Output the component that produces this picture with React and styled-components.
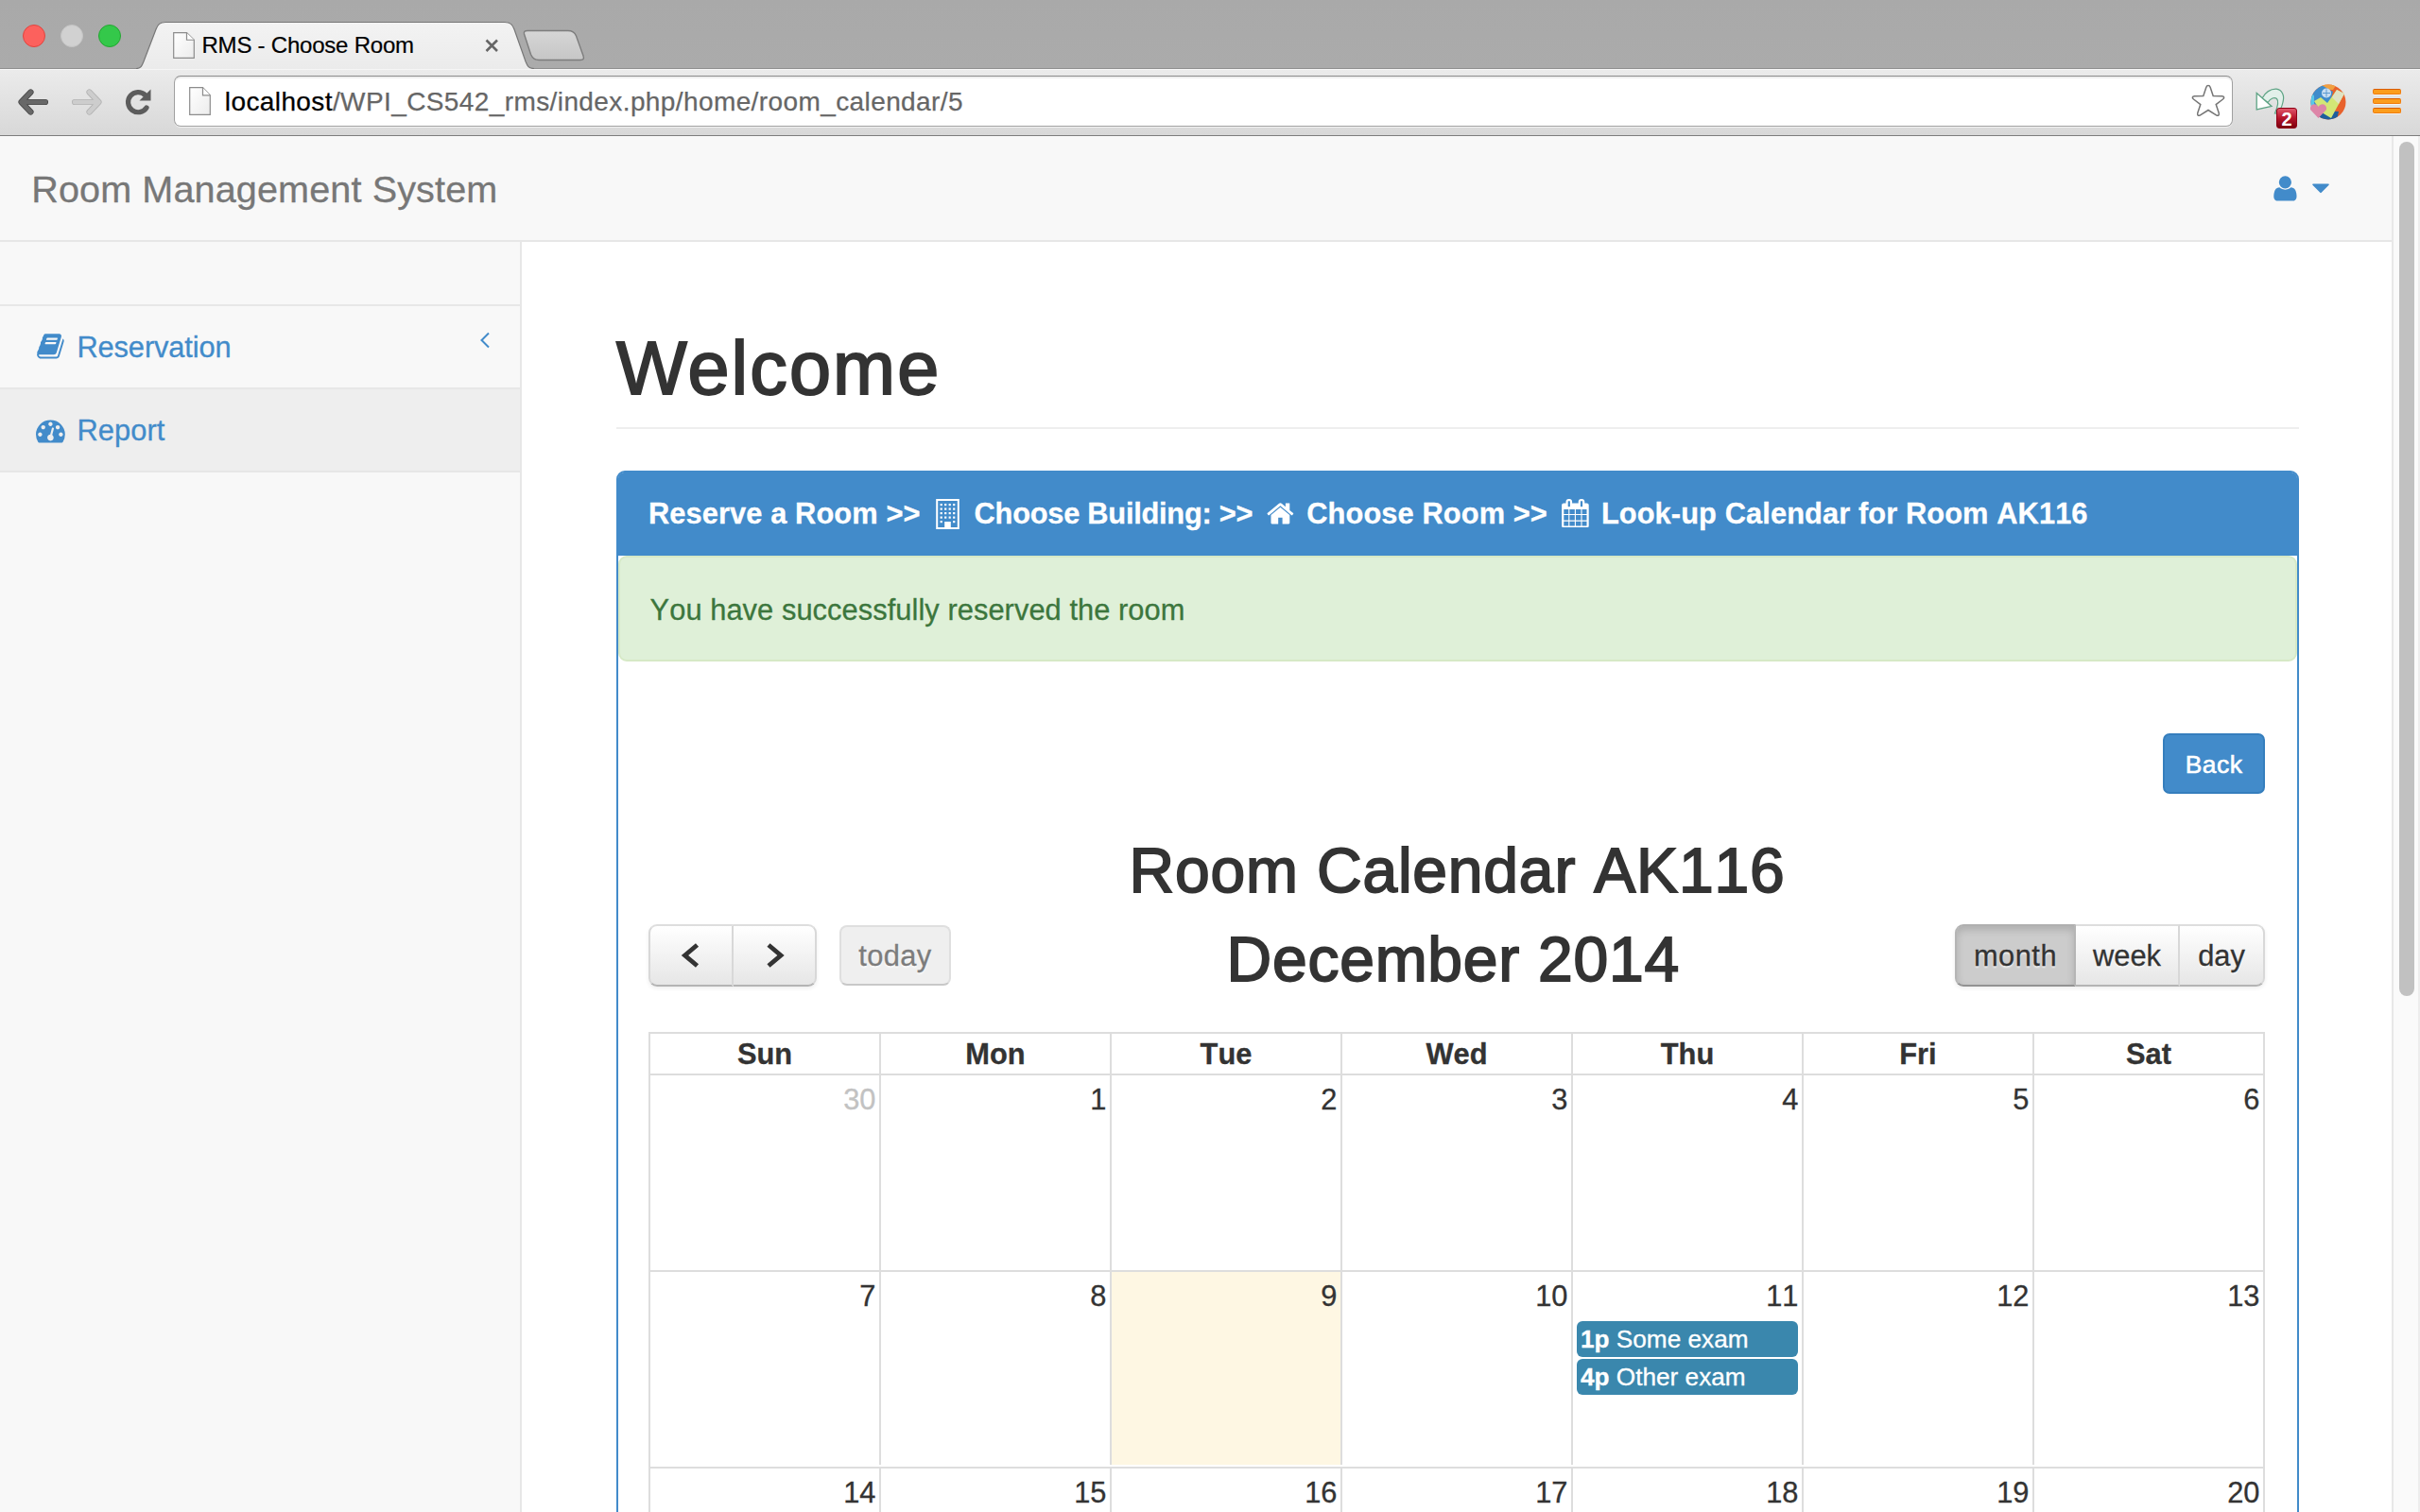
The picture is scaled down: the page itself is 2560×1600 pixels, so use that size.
import React from "react";
import styled, { createGlobalStyle, css } from "styled-components";

const Global = createGlobalStyle`
  *, *::before, *::after { box-sizing: border-box; }
  html, body { margin: 0; padding: 0; background: #fff; }
  body {
    font-family: "Liberation Sans", Arial, Helvetica, sans-serif;
    font-size: 30.8px;
    line-height: 44px;
    font-kerning: none;
    color: #333;
    overflow: hidden;
  }
  svg { display: block; flex: none; }
`;

const Window = styled.div`
  width: 2560px;
  height: 1600px;
  overflow: hidden;
  display: flex;
  flex-direction: column;
`;

/* ---------- browser chrome ---------- */

const TabStrip = styled.div`
  height: 73px;
  flex: none;
  display: flex;
  align-items: flex-start;
  background: linear-gradient(#a9a9a9, #ababab);
  border-bottom: 1px solid #8f8f8f;
`;

const Lights = styled.div`
  display: flex;
  gap: 16px;
  padding: 26px 0 0 24px;
  width: 144px;
`;

const Light = styled.span`
  width: 24px;
  height: 24px;
  border-radius: 50%;
  background: ${(p) => p.$fill};
  border: 1px solid ${(p) => p.$edge};
`;

const Tab = styled.div`
  position: relative;
  width: 422px;
  height: 73px;
  padding: 23px 0 0 39px;
  display: flex;
`;

const TabShape = styled.svg`
  position: absolute;
  left: 0;
  top: 0;
`;

const TabTitle = styled.span`
  position: relative;
  width: 299px;
  margin-left: 7.5px;
  font-size: 24px;
  line-height: 50px;
  letter-spacing: -0.22px;
  color: #000;
  -webkit-text-stroke: 0.2px;
`;

const TabFile = styled.span`
  position: relative;
  padding-top: 11px;
`;

const TabClose = styled.span`
  position: relative;
  padding: 18px 0 0 0;
`;

const NewTab = styled.div`
  padding-top: 31px;
  margin-left: -13px;
`;

const Toolbar = styled.div`
  height: 71px;
  flex: none;
  display: flex;
  align-items: flex-start;
  background: linear-gradient(#ebebeb, #d8d8d8);
  border-top: 1px solid #f6f6f6;
  border-bottom: 1px solid #7c7c7c;
`;

const NavIcons = styled.div`
  width: 184px;
  display: flex;
  padding: 19px 0 0 18px;
  gap: 22.5px;
`;

const AddressBar = styled.div`
  width: 2178px;
  height: 54px;
  margin-top: 6px;
  padding: 0 7px 0 15px;
  display: flex;
  align-items: center;
  background: #fff;
  border: 1px solid #a0a0a0;
  border-top-color: #8c8c8c;
  border-radius: 7px;
  box-shadow: inset 0 2px 1px #eee, 0 1px 0 #f2f2f2;
`;

const Url = styled.div`
  flex: 1;
  margin-left: 14.8px;
  padding-top: 2px;
  font-size: 28px;
  letter-spacing: 0.4px;
  color: #666;
  -webkit-text-stroke: 0.25px;
  b { font-weight: 400; color: #000; }
`;

const Extension = styled.div`
  position: relative;
  margin-left: 24px;
  margin-top: 19px;
  width: 46px;
`;

const Badge = styled.span`
  position: absolute;
  left: 22px;
  top: 21px;
  width: 22px;
  height: 22px;
  border-radius: 3px;
  background: linear-gradient(#e0566a, #b5142a 50%, #7c000f);
  border: 1px solid #8e0014;
  color: #fff;
  font-size: 20px;
  font-weight: 700;
  line-height: 22px;
  text-align: center;
`;

const ExtensionBall = styled.div`
  margin-left: 12px;
  margin-top: 15px;
  width: 66px;
`;

const Hamburger = styled.div`
  margin-top: 20px;
  display: flex;
  flex-direction: column;
  gap: 4px;
  i {
    width: 30px;
    height: 6px;
    border-radius: 2px;
    background: #fb9d1c;
    border: 1px solid #ef7d10;
    border-top-color: #d85c00;
    box-shadow: 0 1px 0 #f4f4f4;
  }
`;

/* ---------- page ---------- */

const Viewport = styled.div`
  flex: 1;
  min-height: 0;
  display: flex;
  -webkit-text-stroke: 0.3px;
`;

const Page = styled.div`
  width: 2530px;
  display: flex;
  flex-direction: column;
`;

const ScrollTrack = styled.div`
  width: 30px;
  padding: 6px 0 0 6px;
  background: #fafafa;
  border-left: 2px solid #e8e8e8;
  border-right: 2px solid #ededed;
`;

const ScrollThumb = styled.div`
  width: 16px;
  height: 904px;
  border-radius: 8px;
  background: #c1c1c1;
`;

const Navbar = styled.header`
  height: 112px;
  flex: none;
  display: flex;
  justify-content: space-between;
  padding: 34px 66px 0 33.2px;
  background: #f8f8f8;
  border-bottom: 2px solid #e7e7e7;
`;

const Brand = styled.span`
  font-size: 39.6px;
  letter-spacing: 0.12px;
  color: #777;
`;

const UserMenu = styled.div`
  display: flex;
  gap: 13px;
  padding-top: 6px;
  color: #428bca;
`;

const Body = styled.div`
  flex: 1;
  min-height: 0;
  display: flex;
`;

const Sidebar = styled.nav`
  width: 552px;
  padding-top: 66px;
  background: #f8f8f8;
  border-right: 2px solid #e7e7e7;
`;

const NavItem = styled.a`
  display: flex;
  height: 88px;
  padding: 0 31px 0 38px;
  line-height: 88px;
  color: #428bca;
  background: ${(p) => (p.$active ? "#eee" : "transparent")};
  border-bottom: 2px solid #e7e7e7;
  svg:first-child { margin-top: ${(p) => (p.$active ? 28 : 27)}px; }
  &:first-child {
    height: 90px;
    border-top: 2px solid #e7e7e7;
  }
`;

const NavLabel = styled.span`
  flex: 1;
  margin-left: 12.6px;
  letter-spacing: ${(p) => p.$ls}px;
`;

const Chevron = styled.svg`
  margin-top: 27px;
`;

const Main = styled.main`
  width: 1780px;
  margin-left: 100px;
`;

const PageTitle = styled.h1`
  margin: 0;
  height: 198px;
  padding-top: 90px;
  border-bottom: 2px solid #eee;
  font-size: 79.2px;
  font-weight: 400;
  line-height: 88px;
  letter-spacing: 2.1px;
  font-kerning: normal;
  -webkit-text-stroke: 2px #333;
`;

const Panel = styled.section`
  margin-top: 44px;
  height: 1300px;
  border: 2px solid #428bca;
  border-radius: 9px;
`;

const PanelHead = styled.div`
  display: flex;
  height: 88px;
  padding: 0 0 0 32px;
  border-radius: 6px 6px 0 0;
  background: #428bca;
  color: #fff;
  font-weight: 700;
  line-height: 88px;
  white-space: nowrap;
  svg { margin-top: 27.5px; }
`;

const Crumb = styled.span`
  width: ${(p) => p.$w}px;
  margin-left: ${(p) => p.$gap || 0}px;
  letter-spacing: ${(p) => p.$ls || 0}px;
`;

const Alert = styled.div`
  height: 112px;
  padding-left: 31.6px;
  background: #dff0d8;
  border: 2px solid #d6e9c6;
  border-radius: 9px;
  color: #3c763d;
  line-height: 111px;
  letter-spacing: 0.07px;
`;

const PanelBody = styled.div`
  padding: 76px 34px 0 32px;
`;

const BackRow = styled.div`
  display: flex;
  justify-content: flex-end;
`;

const BackButton = styled.button`
  width: 108px;
  height: 64px;
  padding: 0;
  border: 2px solid #357ebd;
  border-radius: 7px;
  background: #428bca;
  color: #fff;
  font: 26.4px/62px "Liberation Sans", Arial, sans-serif;
  letter-spacing: 0.5px;
  -webkit-text-stroke: 0.6px #fff;
`;

const titleType = css`
  margin: 0;
  font-size: 66px;
  font-weight: 400;
  text-align: center;
  -webkit-text-stroke: 1.8px #333;
`;

const RoomTitle = styled.h2`
  ${titleType}
  height: 138px;
  padding-top: 44px;
  line-height: 74px;
  letter-spacing: 0.8px;
  text-indent: 1px;
`;

const CalToolbar = styled.div`
  display: grid;
  grid-template-columns: 328px 1fr 328px;
  height: 114px;
`;

const Month = styled.h2`
  ${titleType}
  line-height: 74px;
  letter-spacing: 0.75px;
  padding-right: 7.5px;
`;

const Side = styled.div`
  display: flex;
  align-items: flex-start;
`;

const ButtonGroup = styled.div`
  display: flex;
  height: 66px;
  border-radius: 9px;
  box-shadow: 0 2px 4px rgba(0, 0, 0, 0.07);
`;

const CalButton = styled.button`
  display: flex;
  align-items: center;
  justify-content: center;
  width: ${(p) => p.$w}px;
  height: 66px;
  padding: 0;
  border: 2px solid;
  border-color: #dedede #d8d8d8 #b4b4b4 #d8d8d8;
  border-left-width: ${(p) => (p.$joined ? 0 : 2)}px;
  border-radius: ${(p) => p.$radius || "0"};
  background: linear-gradient(#fff, #e6e6e6);
  color: #333;
  font: 30.8px/60px "Liberation Sans", Arial, sans-serif;
  letter-spacing: ${(p) => p.$ls || 0}px;
  text-shadow: 0 2px 2px rgba(255, 255, 255, 0.75);
  ${(p) =>
    p.$active &&
    css`
      background: #ccc;
      border-color: #b0b0b0 #b5b5b5 #929292;
      box-shadow: inset 0 4px 9px rgba(0, 0, 0, 0.15);
    `}
  ${(p) =>
    p.$disabled &&
    css`
      height: 64px;
      margin: 1px 0 0 24px;
      background: #efefef;
      color: #7c7c7c;
      border-color: #dfdfdf #dfdfdf #c8c8c8;
    `}
`;

const ButtonText = styled.span`
  padding-top: 2px;
  -webkit-text-stroke: 0.3px;
`;

const Calendar = styled.div`
  width: 1710px;
  border: solid #ddd;
  border-width: 2px 2px 0 2px;
`;

const Week = styled.div`
  display: grid;
  grid-template-columns: repeat(7, 244px);
  height: ${(p) => (p.$head ? 44 : 208)}px;
  border-bottom: 2px solid #ddd;
  padding-bottom: ${(p) => (p.$gap ? 2 : 0)}px;
`;

const DayName = styled.div`
  width: 244px;
  border-right: 2px solid #ddd;
  font-weight: 700;
  line-height: 44px;
  text-align: center;
  &:last-child { width: 242px; border-right: 0; }
`;

const Day = styled.div`
  width: 244px;
  padding: 4px 3.6px 0 4px;
  border-right: 2px solid #ddd;
  background: ${(p) => (p.$today ? "#fef7e3" : "transparent")};
  color: ${(p) => (p.$other ? "#c2c2c2" : "#333")};
  text-align: right;
  &:last-child { width: 242px; border-right: 0; }
`;

const DayNumber = styled.div`
  height: 48px;
  line-height: 44px;
`;

const Event = styled.div`
  width: 234px;
  height: 38px;
  margin-bottom: 2px;
  padding-left: 4px;
  border-radius: 6px;
  background: #3a87ad;
  color: #fff;
  font-size: 26.2px;
  line-height: 39px;
  text-align: left;
`;

/* ---------- icons ---------- */

const Glyph = ({ d }) => (
  <svg width="30.8" height="30.8" viewBox="0 0 1792 1792" fill="currentColor">
    <path d={d} />
  </svg>
);

const USER =
  "M1600 1405q0 120-73 189.500t-194 69.500h-874q-121 0-194-69.500t-73-189.500q0-53 3.500-103.500t14-109 26.500-108.500 43-97.500 62-81 85.500-53.500 111.500-20q9 0 42 21.500t74.500 48 108 48 133.500 21.500 133.500-21.500 108-48 74.500-48 42-21.500q61 0 111.500 20t85.500 53.500 62 81 43 97.500 26.500 108.500 14 109 3.500 103.500zm-320-893q0 159-112.500 271.500t-271.500 112.500-271.500-112.500-112.500-271.500 112.500-271.500 271.500-112.500 271.500 112.500 112.500 271.500z";
const BOOK =
  "M1703 478q40 57 18 129l-275 906q-19 64-76.5 107.5t-122.5 43.5h-923q-77 0-148.5-53.5t-99.5-131.5q-24-67-2-127 0-4 3-27t4-37q1-8-3-21.5t-3-19.5q2-11 8-21t16.5-23.5 16.5-23.5q23-38 45-91.5t30-91.5q3-10 .5-30t-.5-28q3-11 17-28t17-23q21-36 42-92t25-90q1-9-2.5-32t.5-28q4-13 22-30.5t22-22.5q19-26 42.5-84.5t27.5-96.5q1-8-3-25.5t-2-26.5q2-8 9-18t18-23 17-21q8-12 16.5-30.5t15-35 16-36 19.5-32 26.5-23.5 36-11.5 47.5 5.5l-1 3q38-9 51-9h761q74 0 114 56t18 130l-274 906q-36 119-71.5 153.5t-128.5 34.5h-869q-27 0-38 15-11 16-1 43 24 70 144 70h923q29 0 56-15.5t35-41.5l300-987q7-22 5-57 38 15 59 43zm-1064 2q-4 13 2 22.5t20 9.5h608q13 0 25.5-9.5t16.5-22.5l21-64q4-13-2-22.5t-20-9.5h-608q-13 0-25.5 9.5t-16.5 22.5zm-83 256q-4 13 2 22.5t20 9.5h608q13 0 25.5-9.5t16.5-22.5l21-64q4-13-2-22.5t-20-9.5h-608q-13 0-25.5 9.5t-16.5 22.5z";
const GAUGE =
  "M384 1152q0-53-37.5-90.5t-90.5-37.5-90.5 37.5-37.5 90.5 37.5 90.5 90.5 37.5 90.5-37.5 37.5-90.5zm192-448q0-53-37.5-90.5t-90.5-37.5-90.5 37.5-37.5 90.5 37.5 90.5 90.5 37.5 90.5-37.5 37.5-90.5zm428 481l101-382q6-26-7.5-48.5t-38.5-29.5-48 6.5-30 39.5l-101 382q-60 5-107 43.5t-63 98.5q-20 77 20 146t117 89 146-20 89-117q16-60-6-117t-72-91zm660-33q0-53-37.5-90.5t-90.5-37.5-90.5 37.5-37.5 90.5 37.5 90.5 90.5 37.5 90.5-37.5 37.5-90.5zm-640-640q0-53-37.5-90.5t-90.5-37.5-90.5 37.5-37.5 90.5 37.5 90.5 90.5 37.5 90.5-37.5 37.5-90.5zm448 192q0-53-37.5-90.5t-90.5-37.5-90.5 37.5-37.5 90.5 37.5 90.5 90.5 37.5 90.5-37.5 37.5-90.5zm320 448q0 261-141 483-19 29-54 29h-1402q-35 0-54-29-141-221-141-483 0-182 71-348t191-286 286-191 348-71 348 71 286 191 191 286 71 348z";
const HOME =
  "M1472 992v480q0 26-19 45t-45 19h-384v-384h-256v384h-384q-26 0-45-19t-19-45v-480q0-1 .5-3t.5-3l575-474 575 474q1 2 1 6zm223-69l-62 74q-8 9-21 11h-3q-13 0-21-7l-692-577-692 577q-12 8-24 7-13-2-21-11l-62-74q-8-10-7-23.5t11-21.5l719-599q32-26 76-26t76 26l244 204v-195q0-14 9-23t23-9h192q14 0 23 9t9 23v408l219 182q10 8 11 21.5t-7 23.5z";
const CALENDAR =
  "M192 1664h288v-288h-288v288zm352 0h320v-288h-320v288zm-352-352h288v-320h-288v320zm352 0h320v-320h-320v320zm-352-384h288v-288h-288v288zm736 736h320v-288h-320v288zm-384-736h320v-288h-320v288zm768 736h288v-288h-288v288zm-384-352h320v-320h-320v320zm-352-864v-288q0-13-9.5-22.5t-22.5-9.5h-64q-13 0-22.5 9.5t-9.5 22.5v288q0 13 9.5 22.5t22.5 9.5h64q13 0 22.5-9.5t9.5-22.5zm736 864h288v-320h-288v320zm-384-384h320v-288h-320v288zm384 0h288v-288h-288v288zm32-480v-288q0-13-9.5-22.5t-22.5-9.5h-64q-13 0-22.5 9.5t-9.5 22.5v288q0 13 9.5 22.5t22.5 9.5h64q13 0 22.5-9.5t9.5-22.5zm384-64v1280q0 52-38 90t-90 38h-1408q-52 0-90-38t-38-90v-1280q0-52 38-90t90-38h128v-96q0-66 47-113t113-47h64q66 0 113 47t47 113v96h384v-96q0-66 47-113t113-47h64q66 0 113 47t47 113v96h128q52 0 90 38t38 90z";

const Building = () => (
  <svg width="25" height="32" viewBox="0 0 25 32" fill="#fff">
    <path d="M1.2 1H23.8V31H1.2Z" fill="none" stroke="#fff" strokeWidth="2" />
    {[5, 9.5, 14, 18.5, 23].map((y, row) =>
      [4.6, 9.1, 13.6, 18.1].map((x, col) =>
        row === 4 && (col === 1 || col === 2) ? null : (
          <rect key={`${x}-${y}`} x={x} y={y} width="2.2" height="2.2" />
        )
      )
    )}
    <rect x="9.2" y="24" width="6.6" height="7" />
  </svg>
);

const FileIcon = ({ w, h }) => (
  <svg width={w} height={h} viewBox="0 0 23 29" preserveAspectRatio="none">
    <defs>
      <linearGradient id="paper" x1="0" y1="0" x2="1" y2="1">
        <stop offset="0" stopColor="#fff" />
        <stop offset="1" stopColor="#ececec" />
      </linearGradient>
    </defs>
    <path d="M.7.7H14.5L22.3 8.500V28.300H.7Z" fill="url(#paper)" stroke="#8c8c8c" strokeWidth="1.2" />
    <path d="M14.5.7V8.500H22.3" fill="#fff" stroke="#8c8c8c" strokeWidth="1.2" />
  </svg>
);

const Arrow = ({ color, edge, flip }) => (
  <svg width="34" height="30" viewBox="0 0 34 30">
    <g
      transform={flip ? "translate(34 0) scale(-1 1)" : undefined}
      fill="none"
      strokeLinecap="round"
      strokeLinejoin="round"
    >
      <path d="M14.500 4.500 4.500 15 14.500 25.500M5 15H30" stroke={edge} strokeWidth="6.2" />
      <path d="M14.500 4.500 4.500 15 14.500 25.500M5 15H30" stroke={color} strokeWidth="4.6" />
    </g>
  </svg>
);

const Reload = () => (
  <svg width="30" height="30" viewBox="0 0 30 30">
    <path d="M24 21A10.600 10.600 0 1 1 22.500 7.500" fill="none" stroke="#5c5c5c" strokeWidth="5.2" strokeLinecap="round" />
    <path d="M28.500 1.500V13.500H16.500Z" fill="#5c5c5c" />
  </svg>
);

const Angle = ({ flip }) => (
  <svg width="24" height="28" viewBox="0 0 24 28">
    <path
      d={flip ? "M6 3 19 14 6 25" : "M18.500 3 5.500 14 18.500 25"}
      fill="none"
      stroke="#333"
      strokeWidth="4.8"
    />
  </svg>
);

/* ---------- data ---------- */

const NAMES = ["Sun", "Mon", "Tue", "Wed", "Thu", "Fri", "Sat"];
const WEEKS = [
  [30, 1, 2, 3, 4, 5, 6],
  [7, 8, 9, 10, 11, 12, 13],
  [14, 15, 16, 17, 18, 19, 20],
];
const EVENTS = {
  11: [
    ["1p", "Some exam"],
    ["4p", "Other exam"],
  ],
};

export default function App() {
  return (
    <Window>
      <Global />
      <TabStrip>
        <Lights>
          <Light $fill="#fc615d" $edge="#e0443e" />
          <Light $fill="#d1d1d1" $edge="#c4c4c4" />
          <Light $fill="#34c84a" $edge="#24a632" />
        </Lights>
        <Tab>
          <TabShape width="422" height="73" viewBox="0 0 422 73">
            <defs>
              <linearGradient id="tab" x1="0" y1="0" x2="0" y2="1">
                <stop offset="0" stopColor="#f3f3f3" />
                <stop offset="1" stopColor="#ebebeb" />
              </linearGradient>
            </defs>
            <path
              d="M0 72.500C5 72.500 6 70 8 65L21 31C23 26 25 23.500 31 23.500H390C396 23.500 398 26 400 31L412 65C414 70 415 72.500 421 72.500V73H0Z"
              fill="url(#tab)"
            />
            <path
              d="M0 72.500C5 72.500 6 70 8 65L21 31C23 26 25 23.500 31 23.500H390C396 23.500 398 26 400 31L412 65C414 70 415 72.500 421 72.500"
              fill="none"
              stroke="#777"
              strokeWidth="1.2"
            />
          </TabShape>
          <TabFile>
            <FileIcon w={23} h={28} />
          </TabFile>
          <TabTitle>RMS - Choose Room</TabTitle>
          <TabClose>
            <svg width="15" height="15" viewBox="0 0 15 15">
              <path d="M1.500 1.500 13 13M13 1.500 1.500 13" stroke="#666" strokeWidth="2.6" />
            </svg>
          </TabClose>
        </Tab>
        <NewTab>
          <svg width="66" height="34" viewBox="0 0 66 34">
            <defs>
              <linearGradient id="newtab" x1="0" y1="0" x2="0" y2="1">
                <stop offset="0" stopColor="#d6d6d6" />
                <stop offset="1" stopColor="#c6c6c6" />
              </linearGradient>
            </defs>
            <path
              d="M5 1.500H48C53 1.500 55 3.500 56.500 7L64 28C65 31 64.500 32.500 61 32.500H17C12 32.500 10 30 8.500 26.500L1.500 5C1 2.500 2 1.500 5 1.500Z"
              fill="url(#newtab)"
              stroke="#7d7d7d"
              strokeWidth="1.4"
            />
          </svg>
        </NewTab>
      </TabStrip>
      <Toolbar>
        <NavIcons>
          <Arrow color="#686868" edge="#4c4c4c" />
          <Arrow color="#cdcdcd" edge="#b4b4b4" flip />
          <Reload />
        </NavIcons>
        <AddressBar>
          <FileIcon w={23} h={30} />
          <Url>
            <b>localhost</b>/WPI_CS542_rms/index.php/home/room_calendar/5
          </Url>
          <svg width="36" height="36" viewBox="0 0 36 36">
            <path
              d="M18 1.500C19 1.500 19.800 2.200 20.200 3.400L23.200 12.400L32.500 12.700C35 12.900 35.400 14.600 33.500 16L26.200 21.600L29.200 30.500C29.900 33 28.400 34 26.500 32.800L18 27.500L9.500 32.800C7.600 34 6.100 33 6.800 30.500L9.800 21.600L2.500 16C.6 14.600 1 12.900 3.500 12.700L12.800 12.400L15.800 3.400C16.200 2.200 17 1.500 18 1.500Z"
              fill="#fff"
              stroke="#757575"
              strokeWidth="1.5"
            />
          </svg>
        </AddressBar>
        <Extension>
          <svg width="32" height="30" viewBox="0 0 32 30">
            <path
              d="M7 11C11 4 16 1 22 1.200C28 2 31 8 29 15C28 20 26 24 22.500 27H20.500C23 21 25 14 22.500 11.500C20 9.500 16 11 13 15.500Z"
              fill="#e2f0ea"
              stroke="#5da384"
              strokeWidth="1.2"
            />
            <path d="M1.200 5.500 17 19.500 1.200 23Z" fill="#fff" stroke="#5da384" strokeWidth="1.3" />
          </svg>
          <Badge>2</Badge>
        </Extension>
        <ExtensionBall>
          <svg width="38" height="38" viewBox="0 0 38 38">
            <defs>
              <clipPath id="ball">
                <circle cx="19" cy="19" r="18.5" />
              </clipPath>
            </defs>
            <g clipPath="url(#ball)">
              <rect width="38" height="38" fill="#e8612c" />
              <path d="M10 0H28L24 6H12Z" fill="#f0a040" />
              <path d="M0 0H10L24 8L20 22L0 26Z" fill="#3f8ccb" />
              <path d="M0 10 4 12V24H0Z" fill="#56c8ea" />
              <path d="M10 28 30 29 28 38H6Z" fill="#1f5d9c" />
            </g>
            <circle cx="17" cy="9.5" r="5" fill="#c8def2" />
            <path d="M17 5.500V13.500M13 9.500H21" stroke="#5b9bd2" strokeWidth="1" />
            <path d="M4 18 11 14 18 20 28 6 36 10 22 36 12 30Z" fill="#d3e676" />
            <path d="M28 6 36 10 30 21 23 14Z" fill="#dfe3c4" />
            <path d="M8.500 36 0 27C-1 21 6 19 8.500 24C11 19 18 21 17 27Z" fill="#dd86a8" />
          </svg>
        </ExtensionBall>
        <Hamburger>
          <i />
          <i />
          <i />
        </Hamburger>
      </Toolbar>

      <Viewport>
        <Page>
          <Navbar>
            <Brand>Room Management System</Brand>
            <UserMenu>
              <Glyph d={USER} />
              <svg width="18" height="30" viewBox="0 0 18 30" fill="currentColor">
                <path d="M1 10.500H17C18 10.500 18 11.500 17.400 12L9.700 19.800C9.300 20.300 8.700 20.300 8.300 19.800L.6 12C0 11.500 0 10.500 1 10.500Z" />
              </svg>
            </UserMenu>
          </Navbar>
          <Body>
            <Sidebar>
              <NavItem>
                <Glyph d={BOOK} />
                <NavLabel $ls={-0.1}>Reservation</NavLabel>
                <Chevron width="12" height="18" viewBox="0 0 12 18">
                  <path d="M10 1.500 2.500 9 10 16.500" fill="none" stroke="#428bca" strokeWidth="2" />
                </Chevron>
              </NavItem>
              <NavItem $active>
                <Glyph d={GAUGE} />
                <NavLabel $ls={0.1}>Report</NavLabel>
              </NavItem>
            </Sidebar>
            <Main>
              <PageTitle>Welcome</PageTitle>
              <Panel>
                <PanelHead>
                  <Crumb $w={304.1} $ls={0.1}>Reserve a Room &gt;&gt;</Crumb>
                  <Building />
                  <Crumb $w={308.9} $gap={15.5} $ls={-0.25}>Choose Building: &gt;&gt;</Crumb>
                  <Glyph d={HOME} />
                  <Crumb $w={268.3} $gap={12} $ls={0.1}>Choose Room &gt;&gt;</Crumb>
                  <Glyph d={CALENDAR} />
                  <Crumb $w={540} $gap={12.5} $ls={0.1}>Look-up Calendar for Room AK116</Crumb>
                </PanelHead>
                <Alert>You have successfully reserved the room</Alert>
                <PanelBody>
                  <BackRow>
                    <BackButton>Back</BackButton>
                  </BackRow>
                  <RoomTitle>Room Calendar AK116</RoomTitle>
                  <CalToolbar>
                    <Side>
                      <ButtonGroup>
                        <CalButton $w={90} $radius="9px 0 0 9px">
                          <Angle />
                        </CalButton>
                        <CalButton $w={88} $joined $radius="0 9px 9px 0">
                          <Angle flip />
                        </CalButton>
                      </ButtonGroup>
                      <CalButton $w={118} $disabled $ls={0.4} $radius="8px">
                        <ButtonText>today</ButtonText>
                      </CalButton>
                    </Side>
                    <Month>December 2014</Month>
                    <ButtonGroup>
                      <CalButton $w={128} $active $ls={0.5} $radius="9px 0 0 9px">
                        <ButtonText>month</ButtonText>
                      </CalButton>
                      <CalButton $w={110} $joined>
                        <ButtonText>week</ButtonText>
                      </CalButton>
                      <CalButton $w={90} $joined $radius="0 9px 9px 0">
                        <ButtonText>day</ButtonText>
                      </CalButton>
                    </ButtonGroup>
                  </CalToolbar>
                  <Calendar>
                    <Week $head>
                      {NAMES.map((n) => (
                        <DayName key={n}>{n}</DayName>
                      ))}
                    </Week>
                    {WEEKS.map((week, i) => (
                      <Week key={i} $gap={i === 1}>
                        {week.map((d) => (
                          <Day key={d} $today={d === 9} $other={d === 30}>
                            <DayNumber>{d}</DayNumber>
                            {(EVENTS[d] || []).map(([time, name]) => (
                              <Event key={time}>
                                <b>{time}</b> {name}
                              </Event>
                            ))}
                          </Day>
                        ))}
                      </Week>
                    ))}
                  </Calendar>
                </PanelBody>
              </Panel>
            </Main>
          </Body>
        </Page>
        <ScrollTrack>
          <ScrollThumb />
        </ScrollTrack>
      </Viewport>
    </Window>
  );
}
